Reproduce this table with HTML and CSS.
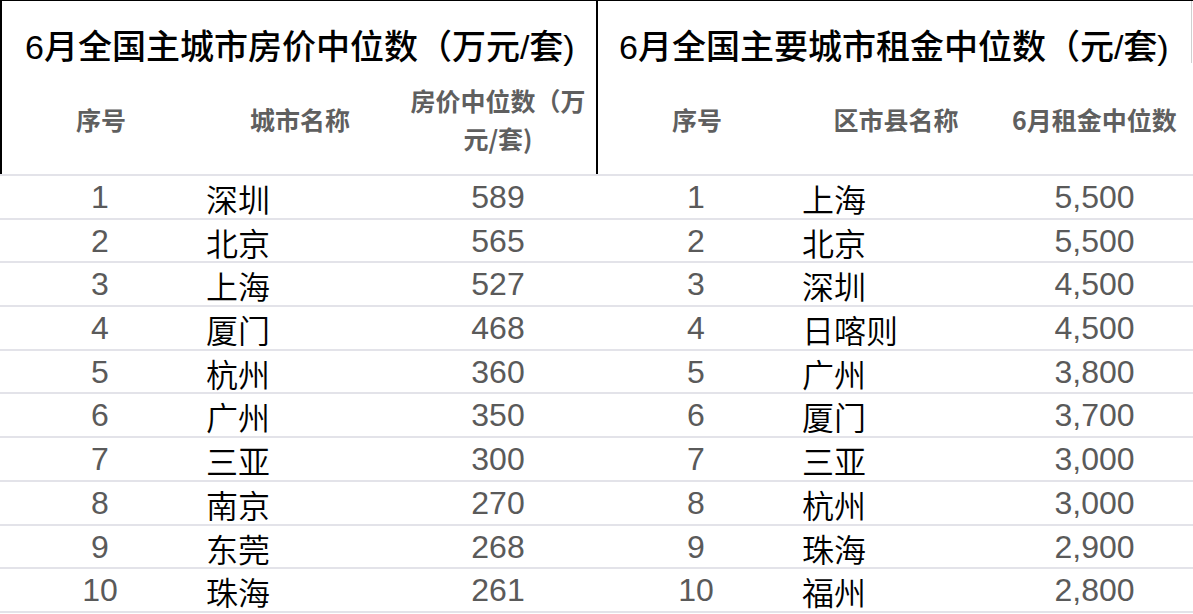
FILE: index.html
```html
<!DOCTYPE html>
<html lang="zh-CN">
<head>
<meta charset="utf-8">
<title>6月全国主要城市房价与租金中位数</title>
<link rel="stylesheet" href="styles.css">
</head>
<body>
<div class="sheet">
  <section class="panel panel-left">
    <div class="head">
      <div class="title">6月全国主城市房价中位数（万元/套)</div>
      <div class="cols">
        <div class="c1">序号</div>
        <div class="c2h">城市名称</div>
        <div class="c3 wrap">房价中位数（万<br>元/套)</div>
      </div>
    </div>
    <div class="body">
      <div class="row"><div class="c1">1</div><div class="c2">深圳</div><div class="c3">589</div></div>
      <div class="row"><div class="c1">2</div><div class="c2">北京</div><div class="c3">565</div></div>
      <div class="row"><div class="c1">3</div><div class="c2">上海</div><div class="c3">527</div></div>
      <div class="row"><div class="c1">4</div><div class="c2">厦门</div><div class="c3">468</div></div>
      <div class="row"><div class="c1">5</div><div class="c2">杭州</div><div class="c3">360</div></div>
      <div class="row"><div class="c1">6</div><div class="c2">广州</div><div class="c3">350</div></div>
      <div class="row"><div class="c1">7</div><div class="c2">三亚</div><div class="c3">300</div></div>
      <div class="row"><div class="c1">8</div><div class="c2">南京</div><div class="c3">270</div></div>
      <div class="row"><div class="c1">9</div><div class="c2">东莞</div><div class="c3">268</div></div>
      <div class="row"><div class="c1">10</div><div class="c2">珠海</div><div class="c3">261</div></div>
    </div>
  </section>
  <section class="panel panel-right">
    <div class="head">
      <div class="title">6月全国主要城市租金中位数（元/套)</div>
      <div class="cols">
        <div class="c1">序号</div>
        <div class="c2h">区市县名称</div>
        <div class="c3">6月租金中位数</div>
      </div>
    </div>
    <div class="body">
      <div class="row"><div class="c1">1</div><div class="c2">上海</div><div class="c3">5,500</div></div>
      <div class="row"><div class="c1">2</div><div class="c2">北京</div><div class="c3">5,500</div></div>
      <div class="row"><div class="c1">3</div><div class="c2">深圳</div><div class="c3">4,500</div></div>
      <div class="row"><div class="c1">4</div><div class="c2">日喀则</div><div class="c3">4,500</div></div>
      <div class="row"><div class="c1">5</div><div class="c2">广州</div><div class="c3">3,800</div></div>
      <div class="row"><div class="c1">6</div><div class="c2">厦门</div><div class="c3">3,700</div></div>
      <div class="row"><div class="c1">7</div><div class="c2">三亚</div><div class="c3">3,000</div></div>
      <div class="row"><div class="c1">8</div><div class="c2">杭州</div><div class="c3">3,000</div></div>
      <div class="row"><div class="c1">9</div><div class="c2">珠海</div><div class="c3">2,900</div></div>
      <div class="row"><div class="c1">10</div><div class="c2">福州</div><div class="c3">2,800</div></div>
    </div>
  </section>
</div>
</body>
</html>
```

FILE: styles.css
```css
* { box-sizing: border-box; }
html, body { margin: 0; padding: 0; background: #fff; }
body { font-family: "Liberation Sans", "Noto Sans CJK SC", sans-serif; }

.sheet {
  display: flex;
  width: 1193px;
}
.panel-left { width: 596px; }
.panel-right { width: 597px; }

.head {
  height: 174px;
  border-top: 1px solid #000;
  border-left: 2px solid #000;
  display: flex;
  flex-direction: column;
}
.panel-right .head { position: relative; }
.panel-right .head::after {
  content: "";
  position: absolute;
  right: 1px;
  top: 0;
  height: 62px;
  border-right: 1px solid #d0d0d0;
}

.title {
  height: 67px;
  padding-top: 25px;
  line-height: 42px;
  font-family: "Liberation Sans", "Noto Sans CJK SC", sans-serif;
  font-size: 34px;
  font-weight: 500;
  color: #000;
  white-space: nowrap;
  padding-left: 23px;
}
.panel-right .title { padding-left: 21px; }

.cols {
  flex: 1;
  display: grid;
  grid-template-columns: 198px 200px 196px;
  align-items: center;
  padding-bottom: 5px;
  font-family: "Noto Sans CJK SC", sans-serif;
  font-size: 25px;
  font-weight: 700;
  color: #5f5f5f;
  line-height: 38px;
}
.panel-right .cols { grid-template-columns: 198px 200px 197px; }
.cols > div { text-align: center; }
.cols .c2h { text-align: center; }
.cols .wrap { padding: 0 2px; }

.body { border-top: 2px solid #e3e3e9; }
.row {
  display: grid;
  grid-template-columns: 200px 200px 196px;
  height: 43.7px;
  border-bottom: 2px solid #e3e3e9;
  align-items: center;
  font-size: 32px;
  line-height: 40px;
}
.panel-right .row { grid-template-columns: 200px 200px 197px; }
.row .c1, .row .c3 {
  text-align: center;
  color: #5a5a5a;
  font-family: "Liberation Sans", sans-serif;
}
.row .c2 {
  padding-left: 6px;
  color: #000;
  font-family: "Noto Sans CJK SC", sans-serif;
  font-weight: 350;
  padding-top: 2px;
}
```
